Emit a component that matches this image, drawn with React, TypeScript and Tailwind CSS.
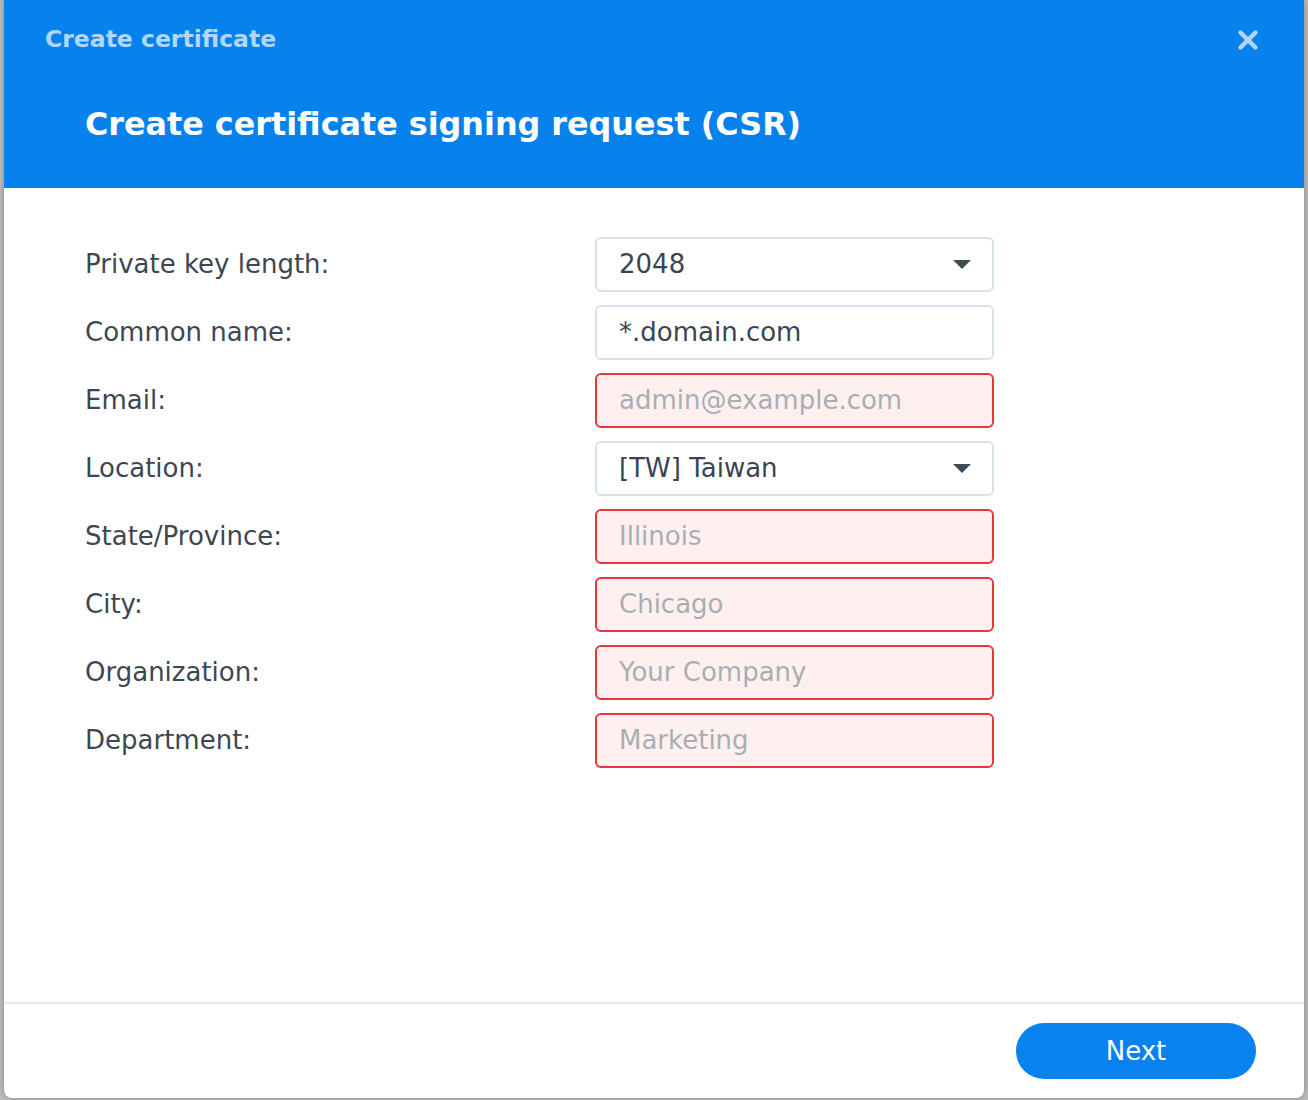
import { X } from "lucide-react";

type Field = {
  label: string;
  value?: string;
  placeholder?: string;
  select?: boolean;
  invalid?: boolean;
};

const fields: Field[] = [
  { label: "Private key length:", value: "2048", select: true },
  { label: "Common name:", value: "*.domain.com" },
  { label: "Email:", placeholder: "admin@example.com", invalid: true },
  { label: "Location:", value: "[TW] Taiwan", select: true },
  { label: "State/Province:", placeholder: "Illinois", invalid: true },
  { label: "City:", placeholder: "Chicago", invalid: true },
  { label: "Organization:", placeholder: "Your Company", invalid: true },
  { label: "Department:", placeholder: "Marketing", invalid: true },
];

function Row({ f }: { f: Field }) {
  return (
    <div className="flex h-[55px] items-center">
      <div className="w-[510px] text-[26px] text-[#3d4752]">{f.label}</div>
      <div
        className={
          f.invalid
            ? "flex h-[55px] w-[399px] items-center rounded-[6px] border-2 border-[#e6373c] bg-[#fff0f0] px-[22px]"
            : "flex h-[55px] w-[399px] items-center rounded-[6px] border-2 border-[#d8e2ec] bg-white px-[22px]"
        }
      >
        <span className={f.value ? "flex-1 text-[26px] text-[#3a4550]" : "flex-1 text-[26px] text-[#a9aeb3]"}>
          {f.value ?? f.placeholder}
        </span>
        {f.select && (
          <svg width="18" height="10" viewBox="0 0 18 10" className="mr-[-1px]">
            <path d="M0 0 H18 L9 9 Z" fill="#414b55" />
          </svg>
        )}
      </div>
    </div>
  );
}

export default function App() {
  return (
    <div
      className="flex h-[1100px] w-[1308px] justify-center overflow-hidden bg-[#bdbdbd]"
      style={{ fontFamily: '"DejaVu Sans", Verdana, sans-serif' }}
    >
      <div className="flex h-[1098px] w-[1300px] flex-col overflow-hidden rounded-b-[8px] bg-white shadow-[0_0_6px_rgba(0,0,0,0.3)]">
        <header className="h-[188px] shrink-0 bg-[#0782ed]">
          <div className="flex items-center justify-between pl-[41px] pr-[41px] pt-[22px]">
            <span className="text-[23.5px] font-bold text-[#b3d6fa]">Create certificate</span>
            <X className="h-[30px] w-[30px] text-[#b3d6fa]" strokeWidth={3.5} />
          </div>
          <h1 className="pl-[81px] pt-[43px] text-[31.8px] font-bold text-white">
            Create certificate signing request (CSR)
          </h1>
        </header>

        <main className="flex flex-1 flex-col gap-[13px] pl-[81px] pt-[49px]">
          {fields.map((f) => (
            <Row key={f.label} f={f} />
          ))}
        </main>

        <footer className="flex h-[96px] shrink-0 items-center justify-end border-t-2 border-[#e4e8ec] pr-[48px]">
          <button className="h-[56px] w-[240px] rounded-full bg-[#0882ee] text-[26px] text-white">Next</button>
        </footer>
      </div>
    </div>
  );
}
